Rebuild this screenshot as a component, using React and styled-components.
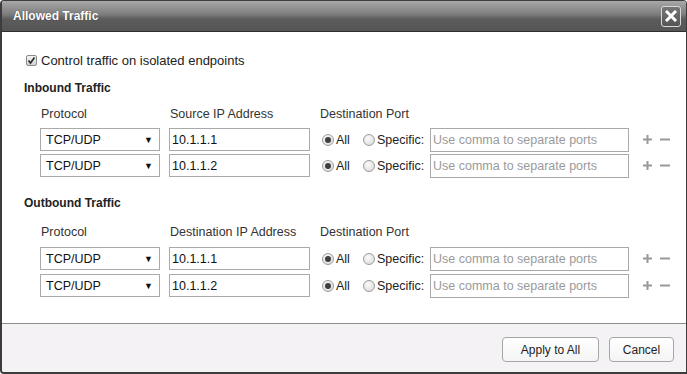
import styled, { createGlobalStyle } from "styled-components";

const GlobalStyle = createGlobalStyle`
  html, body {
    margin: 0;
    padding: 0;
    background: #fff;
  }
  body {
    font-family: "Liberation Sans", Arial, sans-serif;
    font-size: 12.5px;
    color: #222;
  }
`;

const Dialog = styled.div`
  width: 687px;
  height: 374px;
  box-sizing: border-box;
  border: 1px solid #3c3c3c;
  border-left-width: 2px;
  border-bottom-width: 2px;
  border-radius: 4px 4px 0 4px;
  display: flex;
  flex-direction: column;
  overflow: hidden;
  background: #fff;
`;

const TitleBar = styled.div`
  height: 30px;
  flex: none;
  display: flex;
  align-items: center;
  justify-content: space-between;
  padding: 0 5px 0 11px;
  background: linear-gradient(#a8a8a8 0%, #7c7c7c 45%, #5c5c5c 60%, #555 100%);
  border-bottom: 1px solid #2e2e2e;
`;

const Title = styled.span`
  color: #fff;
  font-weight: bold;
  font-size: 12px;
  text-shadow: 0 0 1px rgba(0, 0, 0, 0.5);
`;

const CloseButton = styled.button`
  width: 20px;
  height: 21px;
  padding: 0;
  border: 1px solid #d8d8d8;
  border-radius: 3px;
  background: linear-gradient(#777, #555);
  display: flex;
  align-items: center;
  justify-content: center;
`;

const Body = styled.div`
  flex: 1;
  padding: 19px 0 0 22px;
`;

const CheckRow = styled.label`
  display: flex;
  align-items: center;
  gap: 4px;
  height: 18px;
  padding-left: 2px;
  font-size: 13px;
`;

const CheckBox = styled.span`
  width: 11px;
  height: 11px;
  box-sizing: border-box;
  border: 1px solid #8a8a8a;
  border-radius: 2px;
  background: linear-gradient(#f4f4f4, #d4d4d4);
  display: flex;
  align-items: center;
  justify-content: center;
`;

const SectionTitle = styled.div`
  font-weight: bold;
  font-size: 12px;
  color: #222;
  margin-top: ${(p) => p.$top}px;
  height: 16px;
  line-height: 16px;
`;

const HeaderRow = styled.div`
  display: flex;
  padding-left: 17px;
  margin-top: ${(p) => p.$top}px;
  height: 16px;
  line-height: 16px;
  color: #333;
`;

const HeaderCell = styled.span`
  width: ${(p) => p.$w}px;
  flex: none;
`;

const Rows = styled.div`
  display: flex;
  flex-direction: column;
  gap: ${(p) => p.$gap}px;
  margin-top: ${(p) => p.$top}px;
  padding-left: 16px;
`;

const Row = styled.div`
  display: flex;
  align-items: center;
  height: 23px;
`;

const Select = styled.div`
  width: 120px;
  height: 23px;
  flex: none;
  box-sizing: border-box;
  border: 1px solid #a9a9a9;
  display: flex;
  align-items: center;
  justify-content: space-between;
  padding: 0 6px 0 5px;
  color: #111;
  margin-right: 9px;
`;

const Arrow = styled.span`
  font-size: 9px;
  color: #111;
`;

const TextBox = styled.div`
  width: ${(p) => p.$w}px;
  height: ${(p) => p.$h || 23}px;
  box-sizing: border-box;
  border: 1px solid #a9a9a9;
  padding-left: 2px;
  display: flex;
  align-items: center;
  color: ${(p) => (p.$placeholder ? "#9a9a9a" : "#111")};
  flex: none;
`;

const RadioGroup = styled.div`
  display: flex;
  align-items: center;
  flex: none;
  margin-left: 12px;
  width: 108px;
`;

const RadioLabel = styled.span`
  display: flex;
  align-items: center;
  gap: 2px;
  margin-right: ${(p) => p.$mr || 0}px;
  color: #222;
`;

const Radio = styled.span`
  width: 12px;
  height: 12px;
  box-sizing: border-box;
  border-radius: 50%;
  border: 1px solid #9c9c9c;
  background: radial-gradient(circle at 40% 35%, #fbfbfb, #d6d6d6);
  display: flex;
  align-items: center;
  justify-content: center;

  &::after {
    content: "";
    width: 6px;
    height: 6px;
    border-radius: 50%;
    background: ${(p) => (p.$on ? "#3e3e3e" : "transparent")};
  }
`;

const RowActions = styled.div`
  display: flex;
  align-items: center;
  flex: none;
  gap: 8px;
  margin-left: 14px;
`;

const Footer = styled.div`
  height: 48px;
  flex: none;
  background: #f5f2f5;
  border-top: 1px solid #8c8c8c;
  display: flex;
  align-items: center;
  justify-content: flex-end;
  gap: 10px;
  padding-right: 12px;
`;

const Button = styled.button`
  height: 25px;
  padding: 0;
  width: ${(p) => p.$w}px;
  border: 1px solid #a6a6a6;
  border-radius: 4px;
  background: linear-gradient(#ffffff, #f4f4f4);
  font-family: "Liberation Sans", Arial, sans-serif;
  font-size: 12px;
  color: #222;
  margin-top: 3px;
`;

function Plus() {
  return (
    <svg width="9" height="9" viewBox="0 0 9 9">
      <rect x="0" y="3.5" width="9" height="2" fill="#999" />
      <rect x="3.5" y="0" width="2" height="9" fill="#999" />
    </svg>
  );
}

function Minus() {
  return (
    <svg width="10" height="9" viewBox="0 0 10 9">
      <rect x="0" y="3.5" width="10" height="2" fill="#999" />
    </svg>
  );
}

function TrafficRow({ ip }) {
  return (
    <Row>
      <Select>
        <span>TCP/UDP</span>
        <Arrow>▼</Arrow>
      </Select>
      <TextBox $w={141}>{ip}</TextBox>
      <RadioGroup>
        <RadioLabel $mr={13}>
          <Radio $on />
          All
        </RadioLabel>
        <RadioLabel>
          <Radio />
          Specific:
        </RadioLabel>
      </RadioGroup>
      <TextBox $w={199} $h={24} $placeholder>
        Use comma to separate ports
      </TextBox>
      <RowActions>
        <Plus />
        <Minus />
      </RowActions>
    </Row>
  );
}

function Section({ title, top, ipLabel, headerTop, rowsTop, gap }) {
  return (
    <>
      <SectionTitle $top={top}>{title}</SectionTitle>
      <HeaderRow $top={headerTop}>
        <HeaderCell $w={129}>Protocol</HeaderCell>
        <HeaderCell $w={150}>{ipLabel}</HeaderCell>
        <HeaderCell $w={130}>Destination Port</HeaderCell>
      </HeaderRow>
      <Rows $gap={gap} $top={rowsTop}>
        <TrafficRow ip="10.1.1.1" />
        <TrafficRow ip="10.1.1.2" />
      </Rows>
    </>
  );
}

export default function App() {
  return (
    <>
      <GlobalStyle />
      <Dialog>
        <TitleBar>
          <Title>Allowed Traffic</Title>
          <CloseButton aria-label="Close">
            <svg width="12" height="12" viewBox="0 0 12 12">
              <path d="M2 2 L10 10 M10 2 L2 10" stroke="#fff" strokeWidth="3" strokeLinecap="square" />
            </svg>
          </CloseButton>
        </TitleBar>
        <Body>
          <CheckRow>
            <CheckBox>
              <svg width="9" height="9" viewBox="0 0 9 9">
                <path d="M1.5 4.5 L3.5 7 L7.5 1.5" stroke="#333" strokeWidth="1.8" fill="none" />
              </svg>
            </CheckBox>
            Control traffic on isolated endpoints
          </CheckRow>
          <Section title="Inbound Traffic" top={11} ipLabel="Source IP Address" headerTop={10} rowsTop={6} gap={3} />
          <Section title="Outbound Traffic" top={18} ipLabel="Destination IP Address" headerTop={13} rowsTop={7} gap={4} />
        </Body>
        <Footer>
          <Button $w={97}>Apply to All</Button>
          <Button $w={65}>Cancel</Button>
        </Footer>
      </Dialog>
    </>
  );
}
